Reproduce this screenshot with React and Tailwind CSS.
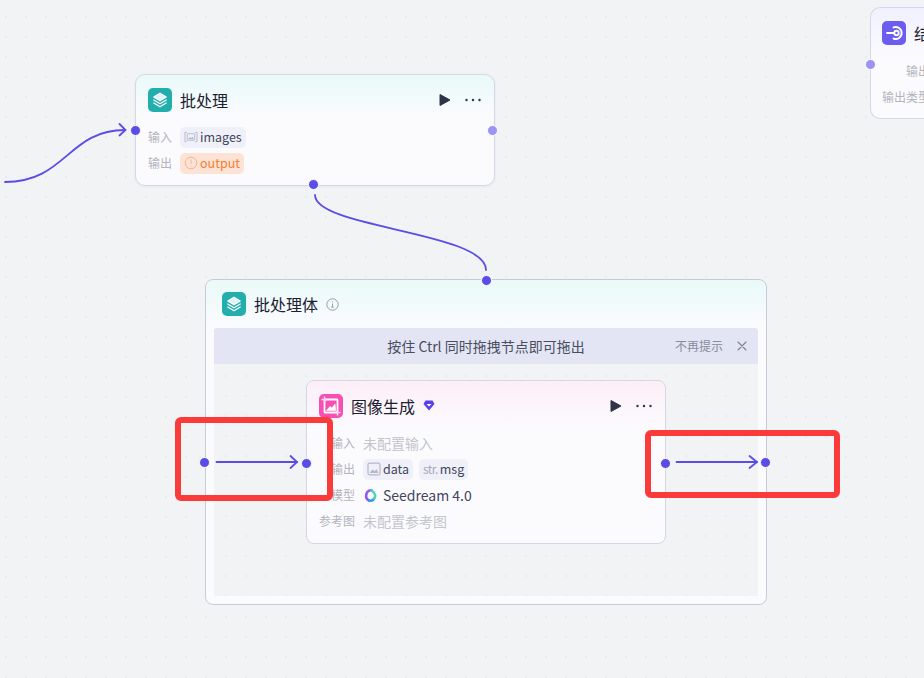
const FONT = "font-['Noto_Sans_CJK_SC','Noto_Sans',sans-serif]";

function LayersIcon() {
  return (
    <svg width="18" height="18" viewBox="0 0 18 18" fill="none" stroke="white" strokeWidth="1.3" strokeLinejoin="round" strokeLinecap="round">
      <path d="M9 2.2 15.2 6 9 9.8 2.8 6Z" fill="#ffffffd9" />
      <path d="M2.8 9 9 12.8 15.2 9" />
      <path d="M2.8 12 9 15.8 15.2 12" />
    </svg>
  );
}

function ImageGlyph({ color = "#b4b8cc" }) {
  return (
    <svg width="14" height="14" viewBox="0 0 14 14" fill="none">
      <rect x="1" y="1.2" width="12" height="11.6" rx="1.5" stroke={color} strokeWidth="1.2" />
      <path d="M2.5 11 5.5 7.5 7.5 9.2 9.5 7 11.5 11Z" fill={color} />
    </svg>
  );
}

function ListImageGlyph() {
  return (
    <svg width="14" height="14" viewBox="0 0 15 14" fill="none">
      <path d="M3 2H1v10h2M12 2h2v10h-2" stroke="#b4b8cc" strokeWidth="1" />
      <rect x="3.5" y="3.5" width="8" height="7" rx="0.5" stroke="#b4b8cc" strokeWidth="1" />
      <path d="M4.5 9.500 6.500 7l1.500 1.200L9.500 6.800l1 2.700Z" fill="#b4b8cc" />
    </svg>
  );
}

function PlayMore() {
  return (
    <div className="flex items-center gap-[13px] ml-auto">
      <svg width="12" height="14" viewBox="0 0 12 14"><path d="M1 1.500 11 7 1 12.500Z" fill="#2f3349" stroke="#2f3349" strokeLinejoin="round" /></svg>
      <svg width="18" height="4" viewBox="0 0 18 4" fill="#2f3349">
        <circle cx="2.500" cy="2" r="1.200" /><circle cx="9" cy="2" r="1.200" /><circle cx="15.500" cy="2" r="1.200" />
      </svg>
    </div>
  );
}

function Chip({ children, className = "bg-[#f0f1f8] text-[#41465c]" }) {
  return (
    <span className={`flex items-center gap-[2px] h-[21px] px-[4px] rounded-[5px] text-[12.5px] leading-none ${className}`}>
      {children}
    </span>
  );
}

function Row({ label, width, children }) {
  return (
    <div className="flex items-center h-[26px] gap-2">
      <span className={`${width} shrink-0 text-right text-[12px] text-[#b3b4bd] whitespace-nowrap`}>{label}</span>
      {children}
    </div>
  );
}

function Handle({ className, light }) {
  return (
    <span className={`absolute w-[11px] h-[11px] rounded-full border-[1.5px] border-white ${light ? "bg-[#9d93f5]" : "bg-[#5a4de6]"} ${className}`} />
  );
}

function Mark({ className }) {
  return <div className={`absolute border-[6px] border-[#fb3a3a] rounded-[6px] ${className}`} />;
}

export default function App() {
  return (
    <div className={`relative w-[924px] h-[678px] overflow-hidden bg-[#f2f3f5] bg-[radial-gradient(#eaebee_1px,transparent_1px)] bg-[size:20px_20px] bg-[position:-4px_7px] ${FONT}`}>
      {/* edges */}
      <svg className="absolute inset-0" width="924" height="678" fill="none" stroke="#5a4de6" strokeWidth="1.8" strokeLinecap="round">
        <path d="M5 182C66 182 68 130 125 130" />
        <path d="M119.500 124 125.500 130 119.500 135.500" />
        <path d="M315 195C315 228 486 232 486 270" />
      </svg>

      {/* right node */}
      <div className="absolute left-[870px] top-[7px] w-[54px] overflow-hidden h-[112px] rounded-l-[10px] border border-r-0 border-[#d6d7e6] bg-gradient-to-b from-[#f1f0fe] to-[#fbfbfe] to-[45%] pl-[11px]">
        <div className="flex items-center gap-2 h-[49px] w-[200px]">
          <span className="flex items-center justify-center w-[24px] h-[24px] rounded-[5px] bg-[#6c5cf0]">
            <svg width="24" height="24" viewBox="0 0 24 24" fill="none" stroke="white" strokeWidth="1.900" strokeLinecap="round">
              <path d="M11.500 6.400a6 6 0 1 1 0 11.200" />
              <circle cx="14.500" cy="12" r="2.200" />
              <path d="M5 12h7" />
            </svg>
          </span>
          <span className="text-[16px] text-[#1c2030]">结束</span>
        </div>
        <div className="pt-[1px] w-[200px]">
          <Row label="输出" width="w-[48px]" />
          <Row label="输出类型" width="w-[48px]" />
        </div>
      </div>
      <Handle light className="left-[864.5px] top-[58.5px]" />

      {/* batch node */}
      <div className="absolute left-[135px] top-[74px] w-[360px] h-[112px] rounded-[10px] border border-[#d6d7e6] bg-gradient-to-b from-[#e9faf8] to-[#fbfbfe] to-[40%] shadow-[0_1px_3px_#0000000d] px-3">
        <div className="flex items-center gap-2 h-[49px]">
          <span className="flex items-center justify-center w-[24px] h-[24px] rounded-[5px] bg-[#22aeac]"><LayersIcon /></span>
          <span className="text-[16px] text-[#1c2030]">批处理</span>
          <PlayMore />
        </div>
        <Row label="输入" width="w-[24px]">
          <Chip><ListImageGlyph />images</Chip>
        </Row>
        <Row label="输出" width="w-[24px]">
          <Chip className="bg-[#fde3d6] text-[#f97b2a]">
            <svg width="14" height="14" viewBox="0 0 14 14" fill="none" stroke="#f9b48c" strokeWidth="1">
              <circle cx="7" cy="7" r="5.800" /><path d="M7 3.500v4.500M7 9.500v1" />
            </svg>
            output
          </Chip>
        </Row>
        <Handle className="-left-[6px] top-[50px]" />
        <Handle light className="-right-[4px] top-[49.5px]" />
        <Handle className="left-[172px] -bottom-[5px]" />
      </div>

      {/* loop container */}
      <div className="absolute left-[205px] top-[279px] w-[562px] h-[326px] rounded-[8px] border border-[#c9cbdc] bg-gradient-to-b from-[#e9faf8] to-[#fbfbfe] to-[15%] flex flex-col">
        <div className="flex items-center gap-2 h-[48px] pl-4">
          <span className="flex items-center justify-center w-[24px] h-[24px] rounded-[5px] bg-[#22aeac]"><LayersIcon /></span>
          <span className="text-[16px] text-[#1c2030]">批处理体</span>
          <svg width="13" height="13" viewBox="0 0 13 13" fill="none" stroke="#9a9ca8" strokeWidth="1">
            <circle cx="6.500" cy="6.500" r="5.700" /><path d="M6.500 5.500v3.500M5.200 9.200h2.600M6.500 3.300v1" />
          </svg>
        </div>
        <div className="flex-1 mx-2 mb-2 rounded-t-[3px] flex flex-col bg-[#f2f3f5] bg-[radial-gradient(#eaebee_1px,transparent_1px)] bg-[size:20px_20px] bg-[position:-18px_-2px]">
          <div className="relative flex items-center justify-center h-[36px] bg-[#e3e5f4] rounded-t-[3px] text-[14px] text-[#4a4d5e]">
            按住 Ctrl 同时拖拽节点即可拖出
            <div className="absolute right-[10px] top-0 h-full flex items-center gap-[13px] text-[12px] text-[#8a8c9a]">
              不再提示
              <svg width="12" height="12" viewBox="0 0 12 12" stroke="#7f8190" strokeWidth="1.100" strokeLinecap="round"><path d="M2 2l8 8M10 2l-8 8" /></svg>
            </div>
          </div>
          {/* image node */}
          <div className="relative ml-[92px] mt-4 w-[360px] h-[164px] rounded-[8px] border border-[#d6d7e6] bg-gradient-to-b from-[#fdeef8] to-[#fbfbfe] to-[30%] px-3">
            <div className="flex items-center gap-2 h-[49px]">
              <span className="flex items-center justify-center w-[24px] h-[24px] rounded-[5px] bg-[#f84fb5]">
                <svg width="24" height="24" viewBox="0 0 24 24" fill="none" stroke="white" strokeWidth="1.800" strokeLinejoin="round">
                  <rect x="5.500" y="5.500" width="13" height="13" rx="0.500" />
                  <path d="M7.500 16.500 11 12.500l2 1.500 3-4 .8 6.500Z" fill="white" strokeWidth="0.600" />
                  <path d="M5.500 2.500v6M2.500 5.500h6M18.500 15.500v6M15.500 18.500h6" strokeWidth="1.400" stroke="#fde0f2" />
                </svg>
              </span>
              <span className="text-[16px] text-[#1c2030]">图像生成</span>
              <svg width="12" height="11" viewBox="0 0 12 11" fill="#5a3fe8"><path d="M2.500.5h7L11.500 4 6 10.500.5 4Z" /><path d="M3.500 4h5L6 6.500Z" fill="white" /></svg>
              <PlayMore />
            </div>
            <Row label="输入" width="w-[36px]"><span className="text-[14px] text-[#c4c5cd]">未配置输入</span></Row>
            <Row label="输出" width="w-[36px]">
              <div className="flex gap-[6px]">
                <Chip><ImageGlyph />data</Chip>
                <Chip><span className="text-[12px] tracking-[-0.6px] text-[#a6a9bd]">str.</span>msg</Chip>
              </div>
            </Row>
            <Row label="模型" width="w-[36px]">
              <div className="flex items-center gap-[5px] text-[14px] text-[#41465c]">
                <svg width="15" height="15" viewBox="0 0 15 15" fill="none" strokeWidth="2.600" strokeLinecap="round">
                  <path d="M8.500 2.300A5.400 5.400 0 0 0 6.500 12.700" stroke="#8e5cf0" />
                  <path d="M6.500 12.700C8.500 13 10.500 12 11.300 10.300" stroke="#2d9cf0" />
                  <path d="M8.500 2.300C10 3.500 12 5.500 12.200 7.500 12.200 8.600 11.800 9.500 11.300 10.300" stroke="#4fd6b8" />
                </svg>
                Seedream 4.0
              </div>
            </Row>
            <Row label="参考图" width="w-[36px]"><span className="text-[14px] text-[#c4c5cd]">未配置参考图</span></Row>
          </div>
        </div>
      </div>
      <Handle className="left-[480.5px] top-[274.5px]" />

      {/* inner connectors */}
      <svg className="absolute inset-0" width="924" height="678" fill="none" stroke="#5a4de6" strokeWidth="1.800" strokeLinecap="round">
        <path d="M216.500 462H297" />
        <path d="M290.500 456 297 462 290.500 468" />
        <path d="M676.500 462H757" />
        <path d="M749.500 456 757 462 749.500 468" />
      </svg>
      <Handle className="left-[199px] top-[456.5px]" />
      <Handle className="left-[301px] top-[457.5px]" />
      <Handle className="left-[660px] top-[457.5px]" />
      <Handle className="left-[760px] top-[456.5px]" />

      {/* annotations */}
      <Mark className="left-[175px] top-[417px] w-[158px] h-[84px]" />
      <Mark className="left-[645px] top-[430px] w-[195px] h-[68px]" />
    </div>
  );
}
